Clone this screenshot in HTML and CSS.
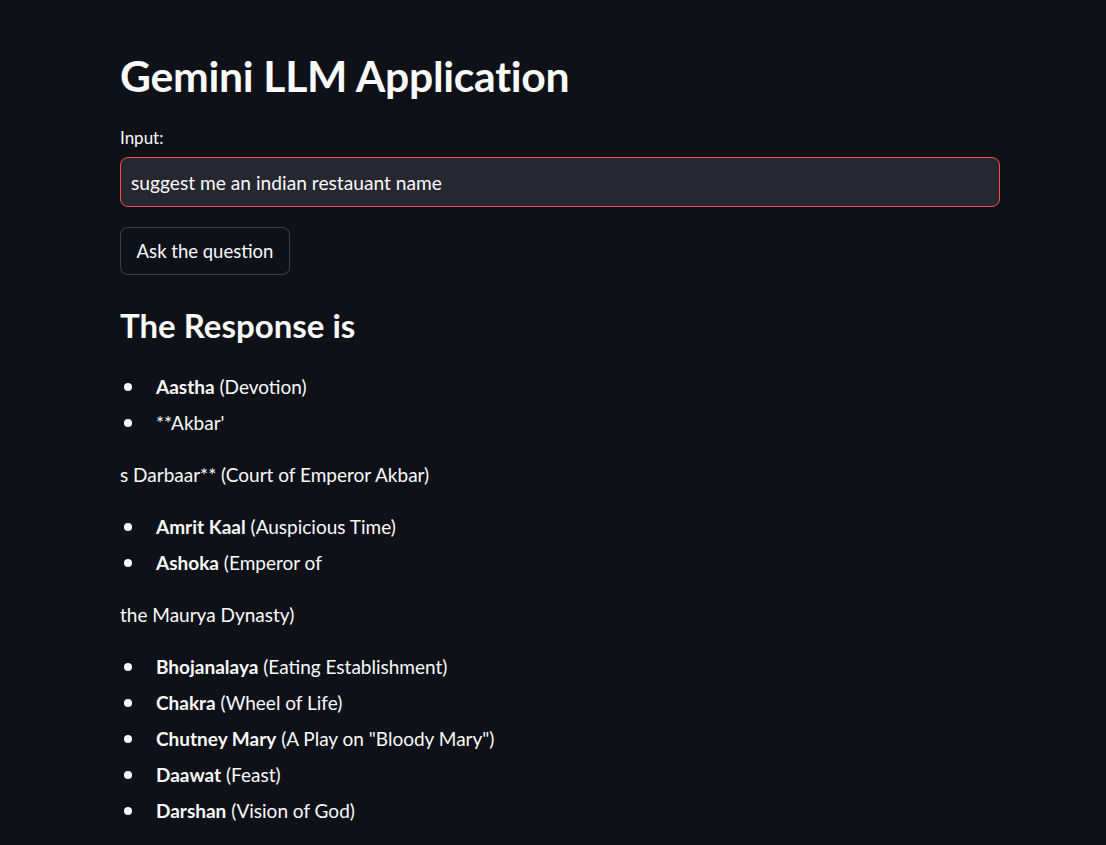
FILE: index.html
```html
<!DOCTYPE html>
<html>
<head>
<meta charset="utf-8">
<link rel="stylesheet" href="styles.css">
</head>
<body>
<main class="main">
  <h1 class="title">Gemini LLM Application</h1>
  <label class="label" for="q">Input:</label>
  <div class="input-box"><input id="q" class="input" type="text" value="suggest me an indian restauant name"></div>
  <button class="btn">Ask the question</button>
  <h2 class="subtitle">The Response is</h2>
  <ul class="list">
    <li><b>Aastha</b> (Devotion)</li>
    <li>**Akbar'</li>
  </ul>
  <p class="para">s Darbaar** (Court of Emperor Akbar)</p>
  <ul class="list">
    <li><b>Amrit Kaal</b> (Auspicious Time)</li>
    <li><b>Ashoka</b> (Emperor of</li>
  </ul>
  <p class="para">the Maurya Dynasty)</p>
  <ul class="list">
    <li><b>Bhojanalaya</b> (Eating Establishment)</li>
    <li><b>Chakra</b> (Wheel of Life)</li>
    <li><b>Chutney Mary</b> (A Play on "Bloody Mary")</li>
    <li><b>Daawat</b> (Feast)</li>
    <li><b>Darshan</b> (Vision of God)</li>
  </ul>
</main>
</body>
</html>
```
FILE: styles.css
```css
html, body {
  margin: 0;
  padding: 0;
  background: #0e1117;
  color: #fafafa;
  font-family: Lato, "Noto Sans", sans-serif;
  height: 100%;
  overflow: hidden;
}
.main {
  width: 880px;
  margin-left: 120px;
  padding-top: 46px;
  display: flex;
  flex-direction: column;
  align-items: flex-start;
}
.title {
  margin: 0;
  font-size: 42.7px;
  line-height: 60px;
  font-weight: 700;
  letter-spacing: -0.3px;
}
.label {
  margin-top: 22px;
  font-size: 17px;
  line-height: 20px;
}
.input-box {
  margin-top: 9px;
  width: 880px;
  height: 50px;
  box-sizing: border-box;
  border: 1px solid #ff4b4b;
  border-radius: 8px;
  background: #262730;
  display: flex;
  align-items: center;
  padding: 0 10px;
}
.input {
  border: 0;
  outline: 0;
  background: transparent;
  color: #fafafa;
  font-family: inherit;
  font-size: 19.2px;
  width: 100%;
  padding: 0;
}
.btn {
  margin-top: 20px;
  height: 48px;
  width: 170px;
  box-sizing: border-box;
  border: 1px solid rgba(250,250,250,0.2);
  border-radius: 8px;
  background: #0e1117;
  color: #fafafa;
  font-family: inherit;
  font-size: 18.5px;
  padding: 0;
}
.subtitle {
  margin: 0;
  margin-top: 30px;
  font-size: 33px;
  line-height: 40px;
  font-weight: 700;
}
.list {
  margin: 0;
  margin-top: 24px;
  padding-left: 36px;
  font-size: 19px;
  line-height: 36px;
  list-style: none;
}
.list li::before {
  content: "";
  display: inline-block;
  width: 8px;
  height: 8px;
  border-radius: 50%;
  background: #fafafa;
  margin-left: -32px;
  margin-right: 24px;
  vertical-align: 3px;
}
.list + .para { margin-top: 16px; }
.para {
  margin: 0;
  font-size: 19px;
  line-height: 36px;
}
.para + .list { margin-top: 16px; }
```
